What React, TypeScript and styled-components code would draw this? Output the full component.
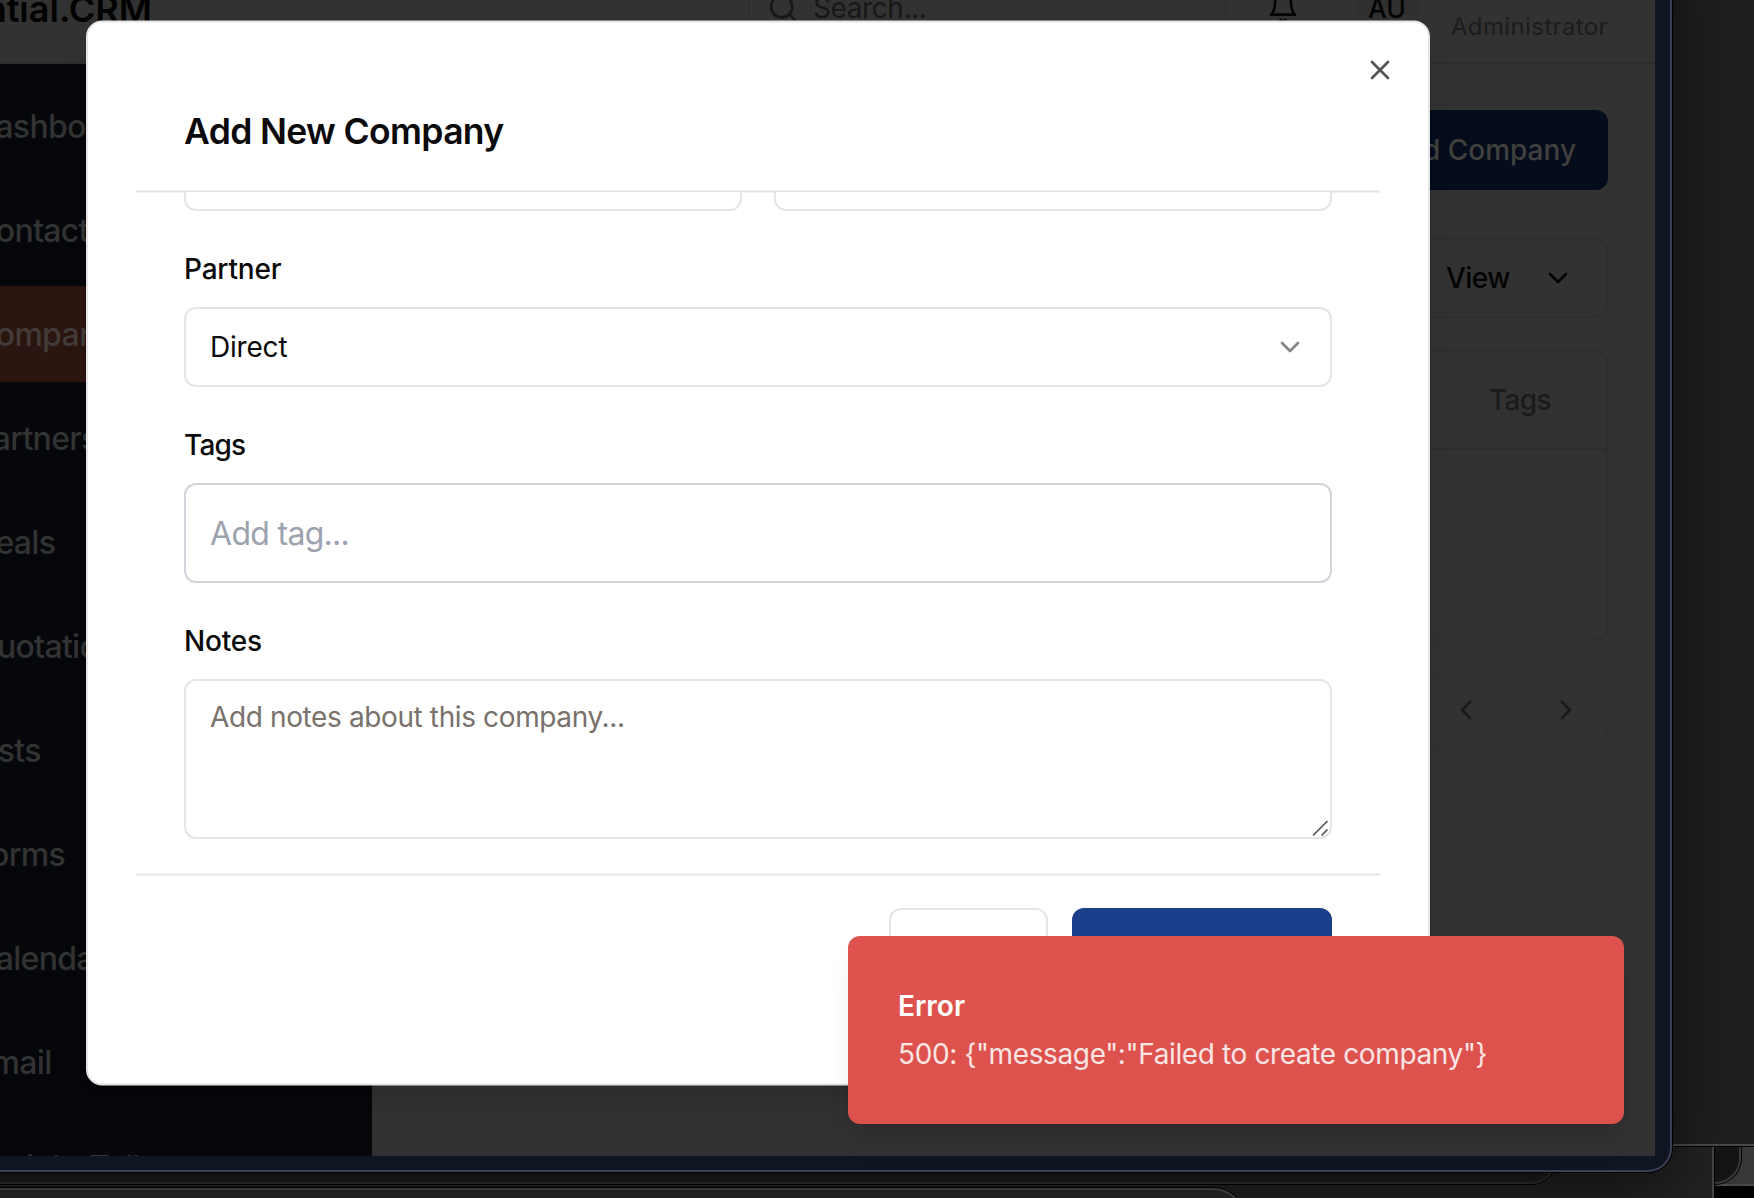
import React from "react";
import styled, { createGlobalStyle, css } from "styled-components";
import { ChevronDown, ChevronLeft, ChevronRight, Search, X } from "lucide-react";

const GlobalStyle = createGlobalStyle`
  *, *::before, *::after { box-sizing: border-box; }
  body { margin: 0; background: #000; overflow: hidden; }
`;

const Desktop = styled.div`
  position: relative;
  width: 1754px;
  height: 1198px;
  overflow: hidden;
  background: #000;
  font-family: Inter, "Liberation Sans", sans-serif;
  font-size: 28px;
  -webkit-font-smoothing: antialiased;
`;

/* Windows stacked behind the browser */
const BackWindow = styled.div<{
  $x: number; $y: number; $w: number; $h: number;
  $bg: string; $edge: string; $radius?: string;
}>`
  position: absolute;
  left: ${p => p.$x}px;
  top: ${p => p.$y}px;
  width: ${p => p.$w}px;
  height: ${p => p.$h}px;
  background: ${p => p.$bg};
  border: 2px solid ${p => p.$edge};
  border-radius: ${p => p.$radius ?? "0"};
  box-shadow: 0 0 0 1px #000;
`;

const BrowserWindow = styled.div`
  position: absolute;
  left: -160px;
  top: -72px;
  width: 1832px;
  height: 1244px;
  padding: 20px 15px 14px 18px;
  background: #0f1521;
  border: 2px solid #3d4055;
  border-radius: 24px;
  box-shadow: 0 0 0 1px #000, 0 12px 64px rgba(0, 0, 0, 0.6);
`;

const Page = styled.div`
  height: 100%;
  display: flex;
  flex-direction: column;
  overflow: hidden;
  background: #323232;
`;

const TopBar = styled.header`
  flex: none;
  height: 114px;
  border-bottom: 2px solid #2d2d2d;
  padding: 3px 47px 0 0;
  display: flex;
  align-items: center;
`;

const Brand = styled.div`
  width: 888px;
  padding-left: 42px;
  padding-top: 2px;
  color: #020202;
  font-size: 36px;
  font-weight: 600;
`;

const SearchBox = styled.div`
  width: 479px;
  height: 80px;
  padding-left: 17px;
  display: flex;
  align-items: center;
  gap: 14px;
  border: 2px solid #2d2d2d;
  border-radius: 12px;
  color: #181716;
  letter-spacing: -0.4px;
`;

const TopActions = styled.div`
  flex: 1;
  display: flex;
  align-items: center;
  padding-left: 40px;
`;

const Avatar = styled.div`
  margin-left: 56px;
  width: 64px;
  height: 64px;
  border-radius: 50%;
  background: #303030;
  color: #030303;
  display: grid;
  place-items: center;
  font-weight: 500;
  font-size: 26.5px;
`;

const Role = styled.div`
  margin-left: auto;
  padding-top: 38px;
  color: #1b1c1f;
  font-size: 24px;
  line-height: 32px;
  letter-spacing: 0.38px;
`;

const Columns = styled.div`
  flex: 1;
  display: flex;
  min-height: 0;
`;

const Sidebar = styled.nav`
  width: 512px;
  padding: 14px 16px 0;
  background: #05070b;
  display: flex;
  flex-direction: column;
  gap: 8px;
  overflow: hidden;
`;

const NavItem = styled.a<{ $active?: boolean; $inset?: boolean }>`
  flex: none;
  height: 96px;
  margin-top: ${p => (p.$inset ? 1 : 0)}px;
  padding-left: ${p => (p.$inset ? 107 : 97)}px;
  display: flex;
  align-items: center;
  border-radius: 12px;
  color: ${p => (p.$active ? "#423b39" : "#323333")};
  background: ${p => (p.$active ? "#2a1510" : "transparent")};
  font-size: 32px;
  font-weight: 500;
  letter-spacing: -0.7px;
`;

const Main = styled.main`
  flex: 1;
  padding: 46px 47px 0 48px;
  display: flex;
  flex-direction: column;
  align-items: flex-end;
`;

const AddCompany = styled.div`
  height: 80px;
  width: 300px;
  padding-right: 32px;
  display: flex;
  align-items: center;
  justify-content: flex-end;
  border-radius: 12px;
  background: #050c1b;
  color: #40413f;
  font-weight: 500;
`;

const outline = css`
  border: 2px solid #2e2e2e;
  border-radius: 12px;
`;

const ViewButton = styled.div`
  ${outline}
  margin-top: 48px;
  height: 80px;
  width: 320px;
  padding-right: 32px;
  display: flex;
  align-items: center;
  justify-content: flex-end;
  gap: 32px;
  color: #030303;
  font-weight: 500;
  letter-spacing: -0.5px;
`;

const Table = styled.div`
  ${outline}
  margin-top: 32px;
  width: 100%;
  height: 291px;
`;

const TableHead = styled.div`
  height: 98px;
  border-bottom: 2px solid #2d2d2d;
  padding-right: 55px;
  display: flex;
  align-items: center;
  justify-content: flex-end;
  color: #1b1a19;
  font-weight: 500;
  letter-spacing: -0.6px;
`;

const Pager = styled.div`
  margin-top: 33px;
  display: flex;
  gap: 16px;
`;

const PageButton = styled.div`
  width: 84px;
  height: 72px;
  display: grid;
  place-items: center;
  border: 2px solid #303030;
  border-radius: 14px;
  color: #191919;
`;

const Dialog = styled.section`
  position: absolute;
  isolation: isolate;
  left: 86px;
  top: 20px;
  width: 1344px;
  height: 1065px;
  padding: 50px;
  display: flex;
  flex-direction: column;
  color: #0a0a0a;

  &::before {
    content: "";
    position: absolute;
    z-index: -1;
    inset: 0;
    background: #fff;
    border: 2px solid #e5e5e5;
    border-radius: 16px;
    box-shadow: 0 20px 30px -6px rgba(0, 0, 0, 0.1), 0 8px 12px -8px rgba(0, 0, 0, 0.1);
    transform: translateY(0.5px);
  }
`;

const CloseButton = styled.div`
  position: absolute;
  right: 34px;
  top: 34px;
  width: 32px;
  height: 32px;
  color: #545454;
`;

const DialogTitle = styled.h2`
  margin: 0;
  height: 120px;
  padding: 40px 48px 0;
  font-size: 35.5px;
  line-height: 44px;
  font-weight: 600;
  letter-spacing: -0.65px;
`;

const Divider = styled.div`
  flex: none;
  height: 3px;
  background: #e4e4e7;
  border: solid #f2f2f3;
  border-width: 1px 0;
`;

const FormBody = styled.div`
  height: 681px;
  margin-top: -1px;
  padding: 0 48px;
  overflow: hidden;
  position: relative;
`;

const TwoColumns = styled.div`
  display: grid;
  grid-template-columns: 1fr 1fr;
  gap: 32px;
  margin-top: -61px;
`;

const Control = styled.div<{ $height?: number; $strong?: boolean; $top?: boolean }>`
  position: relative;
  height: ${p => p.$height ?? 80}px;
  padding: ${p => (p.$top ? "16px" : "0")} 24px;
  display: flex;
  align-items: ${p => (p.$top ? "flex-start" : "center")};
  justify-content: space-between;
  background: #fff;
  border: 2px solid ${p => (p.$strong ? "#d1d5db" : "#e5e5e5")};
  border-radius: 12px;
  line-height: 40px;
  letter-spacing: -0.2px;
`;

const Field = styled.div`
  margin-top: 44px;
  display: flex;
  flex-direction: column;
  gap: 24px;
`;

const Label = styled.label<{ $tracking?: number }>`
  font-weight: 500;
  line-height: 28px;
  letter-spacing: ${p => p.$tracking ?? -0.2}px;
`;

const NotesPlaceholder = styled.span`
  color: #78716c;
  letter-spacing: -0.38px;
`;

const TagPlaceholder = styled.span`
  padding-top: 2px;
  font-size: 32px;
  color: #9ca3af;
  letter-spacing: -0.7px;
`;

const ResizeHandle = styled.svg`
  position: absolute;
  right: 0;
  bottom: 0;
`;

const DialogFooter = styled.div`
  padding: 31.5px 48px 0;
  display: flex;
  justify-content: flex-end;
  gap: 24px;
`;

const FooterButton = styled.div<{ $primary?: boolean }>`
  width: ${p => (p.$primary ? 260 : 159)}px;
  height: 80px;
  border-radius: 12px;
  border: 2px solid ${p => (p.$primary ? "#1c3f8b" : "#e5e5e5")};
  background: ${p => (p.$primary ? "#1c3f8b" : "#fff")};
`;

const Toast = styled.div`
  position: absolute;
  left: 848px;
  top: 936px;
  width: 776px;
  height: 188px;
  padding: 50px;
  display: flex;
  flex-direction: column;
  gap: 8px;
  border-radius: 12px;
  background: #dd524c;
  box-shadow: 0 20px 30px -6px rgba(0, 0, 0, 0.1), 0 8px 12px -8px rgba(0, 0, 0, 0.1);
  line-height: 40px;
`;

const ToastTitle = styled.div`
  color: #fff;
  font-weight: 600;
`;

const ToastText = styled.div`
  color: #fae5e4;
  letter-spacing: -0.38px;
`;

const BellIcon = () => (
  <svg width="32" height="32" viewBox="0 0 24 24" fill="none" stroke="#030303"
    strokeWidth="2" strokeLinecap="round" strokeLinejoin="round">
    <path d="M6 8a6 6 0 0 1 12 0c0 7 3 9 3 9H3s3-2 3-9" />
    <path d="M10.3 21a1.94 1.94 0 0 0 3.4 0" />
  </svg>
);

const navItems = [
  "Dashboard", "Contacts", "Companies", "Partners", "Deals", "Quotations",
  "Lists", "Forms", "Calendar", "Email",
];

export default function App() {
  return (
    <Desktop>
      <GlobalStyle />
      <BackWindow $x={1500} $y={1000} $w={300} $h={186} $bg="#383838" $edge="#4a4a4a" />
      <BackWindow $x={1500} $y={1000} $w={241} $h={184} $bg="#151515" $edge="#3a3a3a" $radius="0 0 26px 0" />
      <BackWindow $x={-20} $y={900} $w={1734} $h={400} $bg="#222" $edge="#454545" />
      <BackWindow $x={1500} $y={-20} $w={300} $h={1166} $bg="#1f1f1f" $edge="#4a4a4a" />
      <BackWindow $x={-30} $y={900} $w={1587} $h={284} $bg="#1e1e1e" $edge="#303030" $radius="0 0 26px 0" />
      <BackWindow $x={-30} $y={1188} $w={1275} $h={100} $bg="#2a2a2a" $edge="#505050" $radius="0 32px 0 0" />

      <BrowserWindow>
        <Page>
          <TopBar>
            <Brand>Essential.CRM</Brand>
            <SearchBox>
              <Search size={32} strokeWidth={2} />
              <span>Search...</span>
            </SearchBox>
            <TopActions>
              <BellIcon />
              <Avatar>AU</Avatar>
              <Role>Administrator</Role>
            </TopActions>
          </TopBar>
          <Columns>
            <Sidebar>
              {navItems.map(name => (
                <NavItem key={name} $active={name === "Companies"}>{name}</NavItem>
              ))}
              <NavItem $inset>Insight Tell</NavItem>
            </Sidebar>
            <Main>
              <AddCompany>Add Company</AddCompany>
              <ViewButton>
                View
                <ChevronDown size={32} />
              </ViewButton>
              <Table>
                <TableHead>Tags</TableHead>
              </Table>
              <Pager>
                <PageButton><ChevronLeft size={32} /></PageButton>
                <PageButton><ChevronRight size={32} /></PageButton>
              </Pager>
            </Main>
          </Columns>
        </Page>
      </BrowserWindow>

      <Dialog>
        <CloseButton><X size={32} strokeWidth={2} /></CloseButton>
        <DialogTitle>Add New Company</DialogTitle>
        <Divider />
        <FormBody>
          <TwoColumns>
            <Control />
            <Control />
          </TwoColumns>
          <Field>
            <Label>Partner</Label>
            <Control>
              Direct
              <ChevronDown size={32} color="#858585" />
            </Control>
          </Field>
          <Field>
            <Label $tracking={-0.8}>Tags</Label>
            <Control $height={100} $strong>
              <TagPlaceholder>Add tag...</TagPlaceholder>
            </Control>
          </Field>
          <Field>
            <Label>Notes</Label>
            <Control $height={160} $top>
              <NotesPlaceholder>Add notes about this company...</NotesPlaceholder>
              <ResizeHandle width="18" height="18" viewBox="0 0 18 18" stroke="#555" strokeWidth="1.7">
                <path d="M1 16.5 15.5 2M9.5 16.5 15.5 10.5" />
              </ResizeHandle>
            </Control>
          </Field>
        </FormBody>
        <Divider />
        <DialogFooter>
          <FooterButton />
          <FooterButton $primary />
        </DialogFooter>
      </Dialog>

      <Toast>
        <ToastTitle>Error</ToastTitle>
        <ToastText>500: {'{"message":"Failed to create company"}'}</ToastText>
      </Toast>
    </Desktop>
  );
}
